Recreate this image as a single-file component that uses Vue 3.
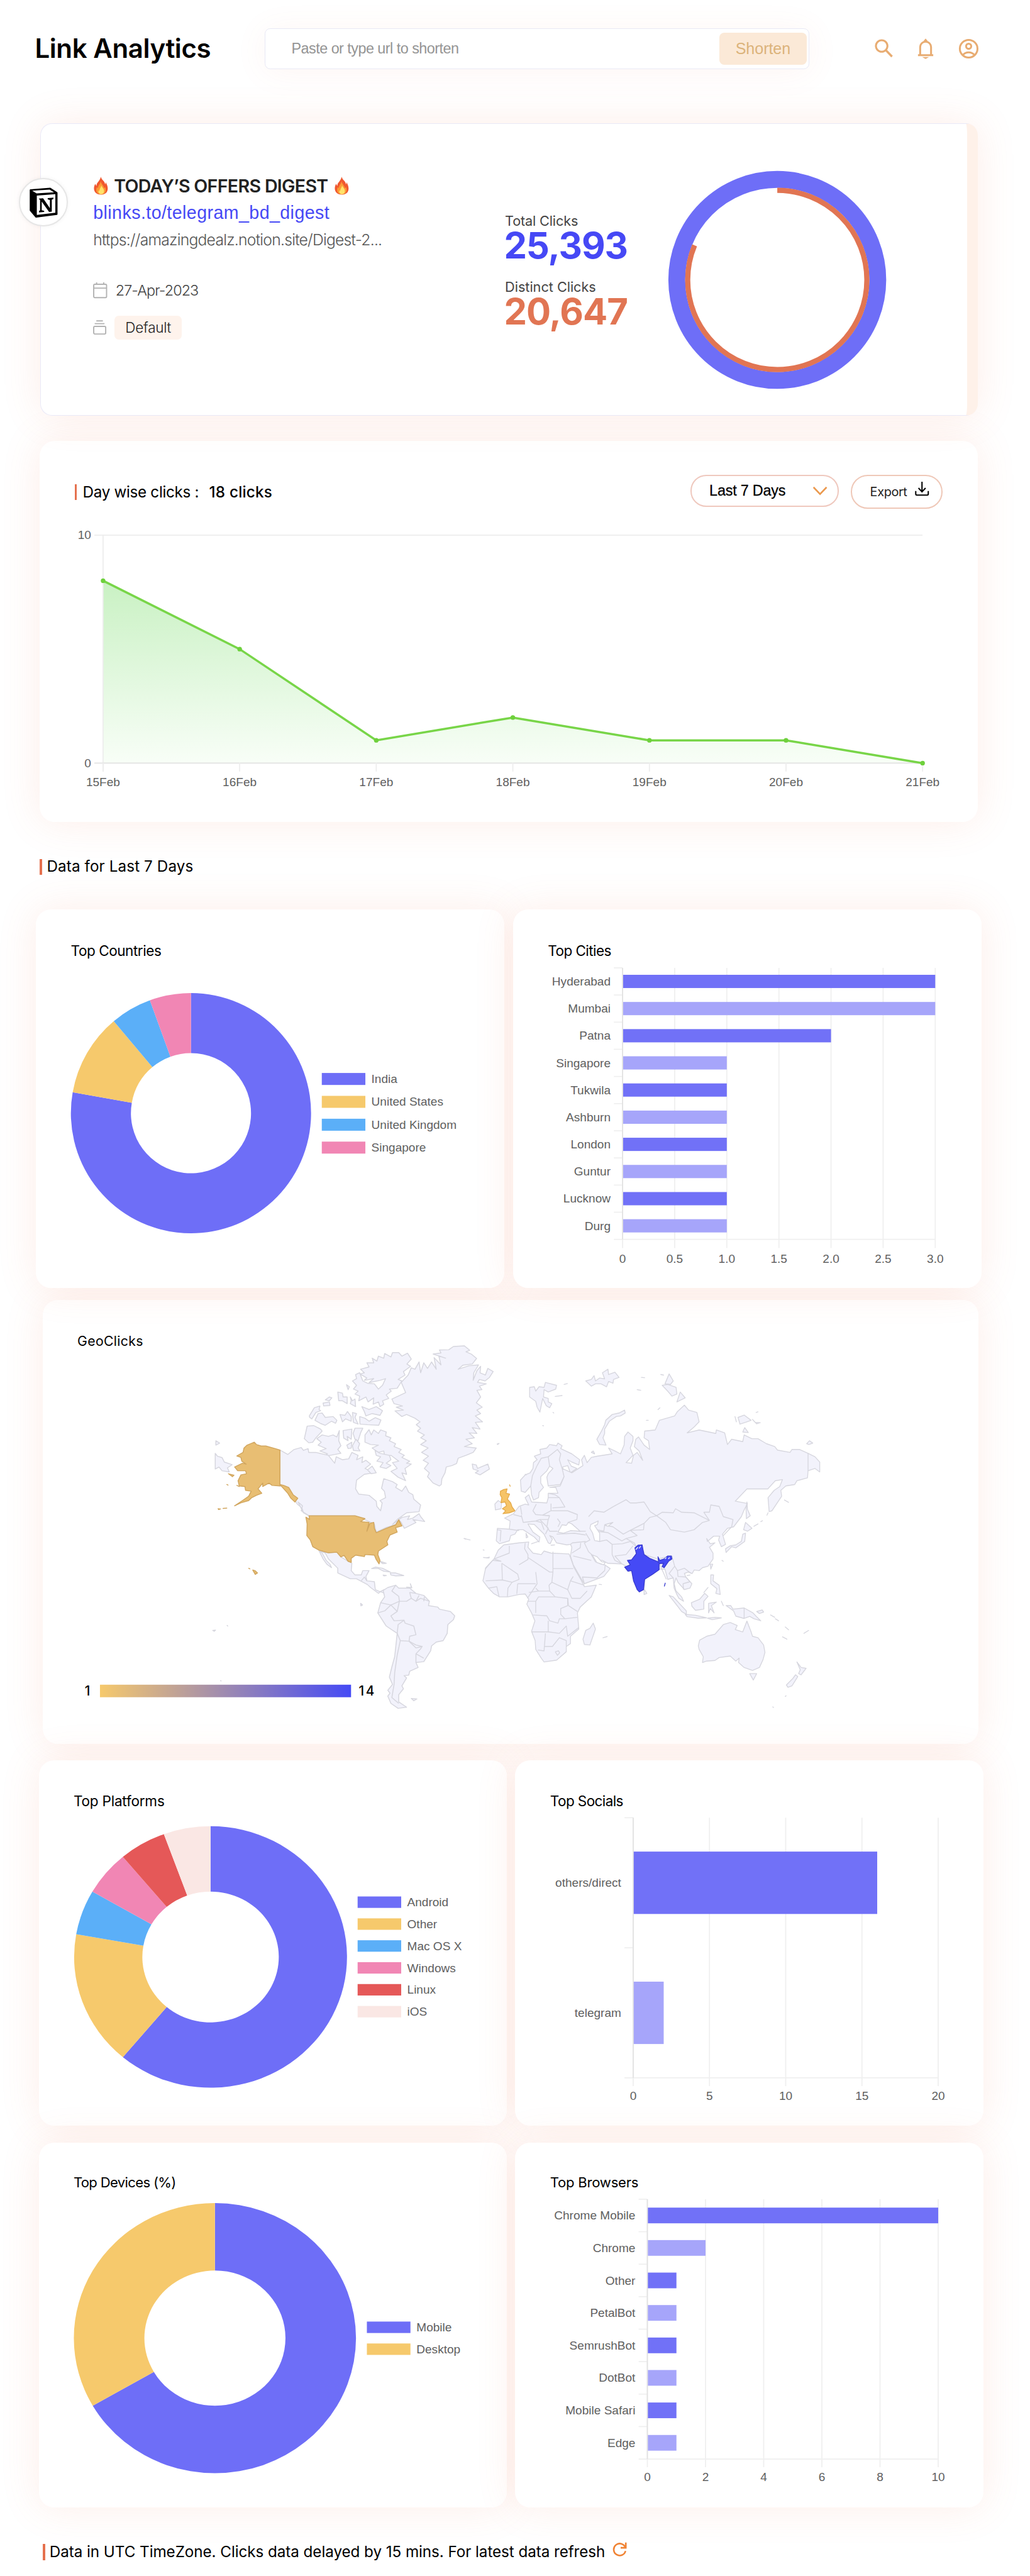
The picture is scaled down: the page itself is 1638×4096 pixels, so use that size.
<script setup>
const vFit = {
  mounted(el, { value }) {
    const page = el.closest('.page')
    const unit = page.getBoundingClientRect().width / 1891
    const width = el.getBoundingClientRect().width / unit
    el.style.letterSpacing = (value - width) / el.textContent.trim().length + 'px'
  },
}

const P = '#6e6ef7'
const L = '#a4a3fa'
const Y = '#f6c96c'
const B = '#5baff8'
const K = '#f186b4'
const R = '#e55858'
const I = '#fae7e4'

function slices(d) {
  const total = d.items.reduce((s, i) => s + i.v, 0)
  let acc = 0
  return d.items.map((i) => {
    const a0 = (acc / total) * Math.PI * 2
    acc += i.v
    const a1 = (acc / total) * Math.PI * 2
    const big = a1 - a0 > Math.PI ? 1 : 0
    const p = (a, k) =>
      `${(d.cx + Math.sin(a) * d.rx * k).toFixed(2)},${(d.cy - Math.cos(a) * d.ry * k).toFixed(2)}`
    return {
      c: i.c,
      d: `M${p(a0, 1)} A${d.rx},${d.ry} 0 ${big} 1 ${p(a1, 1)} L${p(a1, 0.5)} A${d.rx / 2},${d.ry / 2} 0 ${big} 0 ${p(a0, 0.5)}Z`,
    }
  })
}

const rows = [
  {
    cls: 'row-a',
    donut: {
      title: 'Top Countries', tw: 166, box: '66 1769 860 595', cx: 350.8, cy: 2043.8, rx: 220.5, ry: 220.5,
      lx: 591, ly: 1981, step: 42, sh: 22,
      items: [
        { n: 'India', v: 14, c: P }, { n: 'United States', v: 2, c: Y },
        { n: 'United Kingdom', v: 1, c: B }, { n: 'Singapore', v: 1, c: K },
      ],
    },
    bar: {
      title: 'Top Cities', tw: 116, box: '942 1769 860 595', x0: 1143, x1: 1717, y0: 1777, y1: 2275.5, bh: 24.3,
      tick: 16, base: 2318, max: 3, ticks: ['0', '0.5', '1.0', '1.5', '2.0', '2.5', '3.0'],
      items: [
        ['Hyderabad', 3], ['Mumbai', 3], ['Patna', 2], ['Singapore', 1], ['Tukwila', 1],
        ['Ashburn', 1], ['London', 1], ['Guntur', 1], ['Lucknow', 1], ['Durg', 1],
      ],
    },
  },
  {
    cls: 'row-b',
    donut: {
      title: 'Top Platforms', tw: 167, box: '71 3332 859 570', cx: 386, cy: 3592.6, rx: 250.5, ry: 240,
      lx: 656, ly: 3492, step: 40.2, sh: 21,
      items: [
        { n: 'Android', v: 11, c: P }, { n: 'Other', v: 3, c: Y }, { n: 'Mac OS X', v: 1, c: B },
        { n: 'Windows', v: 1, c: K }, { n: 'Linux', v: 1, c: R }, { n: 'iOS', v: 1, c: I },
      ],
    },
    bar: {
      title: 'Top Socials', tw: 134, box: '946 3332 860 570', x0: 1163, x1: 1723, y0: 3337, y1: 3814.5, bh: 114.5,
      tick: 15, base: 3855, max: 20, ticks: ['0', '5', '10', '15', '20'],
      items: [['others/direct', 16], ['telegram', 2]],
    },
  },
  {
    cls: 'row-c',
    donut: {
      title: 'Top Devices (%)', tw: 188, box: '71 4033 859 570', cx: 394, cy: 4292.5, rx: 259, ry: 248,
      lx: 673, ly: 4272.6, step: 40.2, sh: 21,
      items: [{ n: 'Mobile', v: 2, c: P }, { n: 'Desktop', v: 1, c: Y }],
    },
    bar: {
      title: 'Top Browsers', tw: 162, box: '946 4033 860 570', x0: 1189, x1: 1723, y0: 4037.5, y1: 4514.5, bh: 28.8,
      tick: 15, base: 4555, max: 10, ticks: ['0', '2', '4', '6', '8', '10'],
      items: [
        ['Chrome Mobile', 10], ['Chrome', 2], ['Other', 1], ['PetalBot', 1],
        ['SemrushBot', 1], ['DotBot', 1], ['Mobile Safari', 1], ['Edge', 1],
      ],
    },
  },
]
const dims = (b) => {
  const [, , w, h] = b.split(' ')
  return { width: w, height: h }
}
const slot = (b) => (b.y1 - b.y0) / b.items.length

const days = ['15Feb', '16Feb', '17Feb', '18Feb', '19Feb', '20Feb', '21Feb']
const clicks = [8, 5, 1, 2, 1, 1, 0]
const pts = clicks.map((c, i) => [189.5 + i * 250.77, 1400.5 - c * 41.85])
const line = pts.map((p) => p.join(',')).join(' ')

const west = [
  '1210,245 1222,250 1235,225 1240,262 1250,228 1262,247 1275,225 1290,250 1283,210 1305,235 1298,204 1320,212 1280,198 1305,194 1300,184 1330,183 1345,172 1380,170 1397,185 1385,190 1402,198 1419,213 1405,232 1375,236 1360,250 1395,238 1425,235 1410,262 1408,288 1420,255 1432,240 1430,262 1447,270 1455,247 1472,258 1460,278 1446,290 1428,285 1422,295 1450,300 1428,308 1436,320 1420,322 1432,345 1418,365 1437,380 1420,390 1432,402 1415,410 1438,430 1415,432 1430,455 1405,450 1420,470 1395,468 1412,485 1385,490 1405,505 1380,515 1418,520 1408,535 1385,545 1360,555 1355,573 1340,580 1322,585 1318,605 1308,625 1306,645 1300,650 1280,640 1262,618 1268,605 1252,590 1265,572 1248,562 1265,548 1243,535 1264,520 1240,508 1258,495 1240,485 1252,475 1230,462 1240,452 1226,440 1238,430 1222,418 1195,405 1180,412 1158,393 1185,390 1162,380 1182,376 1155,368 1148,352 1192,330 1178,295 1200,270',
  '1210,215 1198,195 1180,205 1170,193 1150,193 1145,208 1125,196 1122,212 1105,205 1100,222 1085,212 1090,228 1068,228 1075,242 1048,250 1060,262 1046,266 1068,280 1060,288 1090,282 1075,296 1110,288 1128,282 1118,305 1105,318 1092,300 1070,298 1055,290 1045,262 1032,268 1035,282 1022,290 1035,305 1025,318 1040,325 1030,335 1045,342 1042,358 1065,345 1072,362 1090,348 1088,370 1105,362 1110,378 1122,370 1118,358 1138,350 1130,338 1146,325 1140,318 1165,315 1180,290 1168,285 1190,270 1185,258 1208,240 1196,232',
  '1052,378 1075,388 1098,378 1118,392 1110,408 1085,402 1065,410 1060,395', '1045,412 1062,418 1075,428 1095,416 1113,424 1106,442 1070,440 1046,438',
  '975,328 990,332 992,345 1005,345 1005,368 990,358 978,358', '1015,345 1022,358 1030,352 1032,378 1015,368 1018,358', '935,355 948,345 956,348 948,358', '928,366 948,362 950,374 930,376', '884,410 900,382 918,376 915,388 920,392 905,398 892,420 885,415', '902,425 912,402 925,400 935,415 960,412 972,425 968,435 955,428 935,442 920,436', '982,405 998,408 1006,395 1018,412 1018,428 1000,420 990,430', '1022,398 1035,402 1030,415 1040,438 1025,432', '1003,303 1012,310 1008,320',
  '877,445 898,443 920,455 925,462 905,485 895,500 882,502 868,488', '908,488 925,475 945,480 960,475 972,482 980,460 978,495 985,512 975,525 985,538 950,545 922,555 942,540 918,530 938,522 912,510 922,500', '992,460 1020,455 1018,490 1005,480 1008,495 994,486', '1030,452 1055,452 1048,468 1040,495 1030,490 1024,470', '1004,510 1020,500 1018,520 1008,522', '1033,490 1045,505 1040,520 1046,530 1025,528 1022,512',
  '1062,475 1075,457 1082,475 1090,458 1105,470 1112,458 1130,465 1128,478 1145,485 1140,495 1160,505 1155,515 1178,525 1170,535 1188,545 1180,552 1205,565 1195,572 1210,575 1190,590 1195,610 1180,605 1192,632 1168,620 1145,600 1165,590 1150,570 1170,565 1145,545 1125,548 1122,530 1105,535 1085,520 1105,510 1080,508 1062,500',
  '1094,528 1110,538 1140,545 1145,560 1130,572 1145,580 1130,590 1110,585 1120,570 1100,565 1112,550 1098,545',
  '790,527 815,542 835,525 858,518 865,528 880,522 882,535 905,535 945,545 965,572 970,550 990,560 1010,557 1020,535 1040,545 1035,560 1055,550 1052,570 1065,562 1080,575 1062,590 1090,605 1060,610 1035,630 1032,660 1042,678 1075,682 1098,702 1100,720 1112,735 1117,708 1110,700 1128,690 1124,668 1115,658 1122,625 1150,635 1165,645 1160,655 1180,668 1192,650 1202,672 1215,680 1218,695 1240,715 1235,738 1195,742 1165,765 1150,782 1180,758 1205,752 1198,765 1215,760 1235,745 1240,755 1253,772 1215,765 1225,775 1188,795 1178,775 1170,765 1160,783 1130,792 1098,808 1092,780 1060,765 1030,752 883,752 865,740 860,725 845,712 820,660 790,650',
  '1070,595 1085,582 1098,605 1082,608', '848,705 862,718 858,735 882,752 865,742', '583,538 590,548 605,553 612,568 637,577 622,588 628,602 605,598 595,585 583,592', '585,495 597,503 585,510',
  '915,872 945,879 972,877 985,893 1008,908 1020,915 1018,940 1030,955 1050,955 1055,940 1075,940 1065,960 1068,975 1092,978 1095,1005 1110,1012 1123,1005 1125,1018 1112,1012 1105,1018 1080,998 1070,988 1035,968 1015,968 975,948 975,932 945,900 935,880', '915,872 925,880 938,905 950,918 955,930 940,918 928,900',
  '1083,933 1095,928 1118,932 1143,945 1122,942 1105,933', '1143,948 1160,948 1186,957 1160,958 1145,955', '1120,955 1130,957 1122,958', '1110,908 1130,915 1118,916', '1195,997 1212,999 1207,985 1211,998',
  '1120,1008 1135,998 1160,990 1170,1000 1205,1000 1225,1018 1250,1025 1268,1045 1265,1060 1295,1065 1300,1072 1335,1080 1349,1095 1345,1108 1327,1125 1325,1155 1312,1180 1290,1185 1275,1198 1272,1215 1250,1252 1225,1255 1232,1272 1205,1285 1202,1298 1187,1300 1195,1308 1180,1335 1185,1345 1170,1365 1170,1390 1195,1408 1168,1412 1145,1395 1135,1370 1142,1360 1135,1350 1150,1330 1140,1305 1148,1270 1157,1235 1165,1155 1130,1130 1103,1085 1112,1050 1125,1030',
  '1210,1378 1228,1380 1218,1386', '1405,575 1418,578 1422,590 1455,575 1460,592 1430,612 1415,605 1425,598 1408,592', '575,1145 584,1144 580,1148', '1048,1052 1054,1058 1049,1061', '621,1128 623,1130', '1380,830 1384,832', '1440,869 1443,870', '600,1317 602,1318', '1485,506 1490,505', '1452,896 1460,894',
]
const westLines = [
  '1103,1085 1125,1078 1145,1058 1165,1080 1145,1095 1155,1112 1187,1110 1190,1120 1218,1130 1225,1160 1205,1165 1203,1182 1225,1195 1245,1200 1240,1208 1225,1225 1225,1255',
  '1165,1155 1175,1180 1203,1182 1225,1205 1245,1200', '1175,1180 1165,1230 1157,1290 1155,1330 1148,1375 1170,1395', '1112,1050 1145,1058', '1145,1058 1172,1045 1165,1080', '1160,990 1148,1010 1170,1028 1172,1045 1195,1045 1210,1035 1205,1015 1225,1018', '1210,1035 1225,1045 1240,1035 1268,1045', '1225,1045 1235,1025', '1250,1045 1252,1030', '1187,1110 1168,1125 1165,1155', '1225,1225 1250,1240', '1050,975 1060,962 1068,975',
]
const usa = [
  '883,752 1030,752 1062,762 1048,772 1075,775 1068,805 1078,778 1090,775 1092,795 1098,810 1130,795 1160,783 1170,766 1180,787 1160,793 1165,808 1142,818 1132,840 1135,852 1105,873 1103,885 1110,905 1107,917 1097,900 1092,887 1062,885 1060,892 1032,887 1018,898 1018,912 1008,908 995,888 985,893 972,877 945,879 915,870 895,858 887,835 876,820 877,780 873,757 885,765',
  '708,500 715,508 730,513 745,513 775,522 790,527 790,650 765,648 755,640 735,652 735,640 720,660 732,675 715,682 700,690 690,700 665,708 645,718 670,700 690,685 698,668 680,665 678,652 660,650 656,632 665,612 683,608 680,598 655,598 645,585 670,572 682,575 668,565 665,552 652,547 672,535 675,520 685,510',
  '790,645 802,648 818,655 832,680 847,692 838,705 825,692 815,675', '625,608 643,613 638,618', '592,728 600,729 594,731', '608,727 620,726', '690,932 694,934', '703,938 710,940 718,948 711,953', '652,648 660,652', '620,645 624,647',
]
const east = [
  '245,630 262,612 280,605 290,590 292,570 305,560 295,548 318,540 315,525 340,520 350,508 375,512 380,503 395,512 390,522 430,540 458,560 455,578 430,568 415,560 428,582 448,590 425,605 415,580 397,585 402,618 388,645 345,650 340,620 345,608 362,590 350,582 340,598 318,618 318,640 328,655 312,672 310,690 292,698 285,680 282,650 262,672 248,668',
  '278,312 295,310 300,325 312,310 330,312 335,295 375,305 372,318 345,328 330,320 328,345 345,350 345,362 358,368 350,382 338,375 325,350 315,397 305,380 300,360 278,345', '480,290 500,285 510,272 515,290 530,280 548,283 540,262 560,250 562,268 585,260 600,278 580,285 578,298 562,292 555,310 535,300 515,300 500,308', '620,390 622,400 605,410 590,412 565,428 548,455 548,470 542,485 553,510 530,508 520,490 535,465 548,440 552,425 575,405 600,400',
  '780,266 795,290 785,302 765,300', '755,305 775,302 805,312 808,335 790,342 775,325', '820,328 838,348 808,362', '1017,412 1022,430', '1028,415 1050,407 1075,425 1055,432 1035,438', '1080,422 1090,432 1108,433 1095,437', '1045,465 1052,450 1065,467', '1275,505 1285,495 1297,503 1283,508', '500,535 507,530 512,540', '402,302 414,299', '370,343 395,340', '680,278 692,279', '750,268 760,270', '665,320 678,322', '740,388 747,382', '698,425 705,425', '1093,398 1100,396', '262,610 266,612',
  '402,618 395,590 430,605 470,580 465,560 475,545 485,570 500,552 520,548 575,540 562,520 585,530 605,540 618,510 620,480 632,465 650,480 650,495 640,520 650,545 625,570 645,572 652,545 665,535 685,562 672,530 655,515 660,490 670,482 690,510 710,525 706,495 690,485 692,462 730,458 745,425 800,410 810,395 835,373 850,390 880,398 888,430 870,448 845,468 888,458 948,470 950,458 980,468 990,508 1005,490 1045,498 1050,475 1078,488 1100,488 1130,505 1160,515 1170,527 1215,535 1222,525 1250,525 1280,538 1305,550 1322,568 1322,602 1305,590 1280,598 1278,622 1240,632 1232,645 1200,650 1182,665 1185,685 1150,735 1140,738 1136,690 1158,665 1178,652 1188,628 1162,632 1135,660 1060,660 1018,702 1062,710 1050,732 1040,755 1012,790 990,795 972,815 983,850 968,858 958,835 962,822 940,822 918,840 915,830 928,848 945,845 925,860 938,880 938,900 920,925 900,930 888,940 870,938 863,950 848,945 835,950 840,962 862,985 855,1000 835,1005 812,980 805,965 798,985 805,1010 825,1030 832,1045 815,1035 808,1022 798,1000 795,965 775,970 765,935 745,935 720,930 692,960 690,1000 672,1000 655,965 645,930 625,925 610,917 560,915 540,905 525,905 500,885 515,910 535,918 548,920 568,933 545,960 475,985 465,970 435,920 425,890 430,860 425,850 412,852 375,845 362,825 350,820 360,832 352,848 345,845 330,815 295,782 272,780 290,808 315,825 312,842 295,825 255,800 235,800 225,815 210,820 205,838 170,848 158,838 162,795 205,798 208,770 188,760 220,745 240,720 262,712 275,715 262,690 275,680 285,705 340,708 345,690 345,675 380,675 372,655 350,655 388,650',
  '153,712 165,700 177,708 175,728 155,732', '265,812 272,825 266,828', '285,848 310,840', '355,853 368,852',
  '185,852 240,845 275,842 272,860 290,880 320,885 330,873 355,880 420,883 425,895 438,930 465,975 475,995 518,990 500,1030 460,1065 450,1085 455,1140 425,1165 425,1190 410,1200 410,1218 375,1247 330,1253 320,1240 300,1210 298,1180 285,1148 297,1112 285,1085 268,1055 275,1038 262,1020 240,1022 200,1030 170,1030 148,1018 130,1000 110,975 120,930 150,900 165,870',
  '507,1120 515,1140 495,1195 475,1193 470,1175 480,1145 495,1138', '690,1003 700,1018 690,1022',
  '780,1025 795,1030 842,1078 842,1090 825,1080 805,1055', '838,1090 875,1093 915,1102 885,1103 845,1098', '918,1103 945,1100 968,1102 935,1108', '860,1050 890,1038 908,1018 920,1028 905,1045 905,1072 875,1076 862,1062', '922,1052 950,1048 932,1060 942,1085 928,1070 922,1085', '985,1060 1002,1060 1010,1072 1050,1068 1082,1085 1095,1098 1110,1112 1085,1105 1070,1097 1050,1104 1020,1096 1012,1078', '1095,1080 1115,1075 1120,1082 1105,1087', '1145,1092 1160,1100', '1162,1105 1174,1112', '930,955 940,955 938,975 960,990 964,1022 948,1018 952,1002 930,985', '905,1015 920,998', '968,1045 975,1060', '928,918 937,918 930,935', '845,957 855,955',
  '983,865 1000,855 1020,852 1040,840 1045,815 1055,812 1052,840 1020,862 1005,858 985,878', '1048,800 1055,775 1078,795 1062,805', '1060,705 1062,730 1072,752 1058,762 1057,730', '1085,788 1100,780', '1110,772 1116,769', '1132,750 1136,742', '970,905 975,908',
  '885,1198 890,1178 915,1165 945,1158 975,1125 1000,1118 1025,1128 1018,1142 1045,1150 1060,1113 1075,1150 1080,1165 1100,1170 1120,1195 1125,1220 1118,1245 1105,1272 1080,1282 1050,1272 1030,1255 1032,1240 1020,1250 1000,1233 960,1238 945,1248 915,1250 900,1255 903,1235 888,1210', '1070,1293 1095,1293 1083,1315', '1240,1253 1255,1272 1273,1275 1255,1297 1246,1293 1252,1280', '1235,1297 1243,1303 1222,1335 1208,1340 1202,1332 1225,1310', '1198,1133 1210,1143', '1188,1167 1204,1175', '1265,1155 1282,1145', '1153,1407 1156,1409', '1198,1371 1201,1369', '42,830 64,835', '162,508 168,504', '528,987 537,988', '112,895 132,897', '542,1170 557,1166', '1195,698 1210,706', '362,398 365,400', '325,443 328,444',
]
const seas = ['380,808 395,783 410,785 418,775 430,780 460,805 425,803 400,812', '498,782 525,770 522,782 512,786 530,812 530,840 512,837 505,812 495,795', '503,886 520,892 538,910 550,912 545,920 520,912', '548,783 578,775 560,788']
const eastLines = [
  '282,650 288,615 305,580 320,555 345,550 350,582', '345,550 378,525 390,540 385,560 395,590', '490,755 510,735 545,740 580,720 625,697 640,708 662,708 690,705 712,738 735,752 710,758 690,778 688,800 640,802 615,815 578,790 548,785 545,805 520,800', '735,752 755,740 795,742 803,728 825,740 870,742 925,768 900,775 870,800 835,808 785,800 768,775 735,752', '925,768 905,740 925,740 930,715 960,720 975,755 1010,765 1005,790 975,820',
  '640,802 665,820 625,830 655,845 662,858', '690,885 740,900 790,890 800,925 810,940 835,932 860,950', '740,905 770,970', '800,925 780,950 795,965', '810,940 812,960 840,962 855,978 830,985 832,1005', '480,812 495,835 475,845 490,875 505,888', '530,840 555,835 575,850 575,885 585,905 610,917', '575,850 612,848 640,840 662,858', '520,805 560,810 610,838 625,830', '690,778 640,802', '425,850 432,845 480,840', '430,880 460,862 462,845', '435,890 500,905', '475,985 468,962 520,965 548,940 550,920', '610,917 585,890 625,885 650,855',
  '248,750 255,775 300,770 315,765 345,765 350,752 300,748 290,735 302,712', '245,720 250,748', '220,748 248,755', '355,710 355,735 325,750', '355,735 415,735 450,748 448,765 415,775', '345,765 340,790 350,805 378,805', '378,762 388,775 380,790', '300,770 320,775 330,800', '315,765 345,795 335,815', '375,815 440,812 480,818', '345,690 385,690 405,722 360,725', '345,675 370,680 385,690', '162,800 175,802 172,840', '205,798 240,803', '480,805 455,805', '325,750 350,752',
  '118,935 145,905 175,908 150,900 205,880 205,855', '178,915 235,952 240,970 215,980 180,972 120,975', '178,915 180,972', '262,845 260,865 272,885 272,902 240,920', '272,895 350,945 362,945 362,875', '362,933 435,933', '362,945 358,980 348,990 350,1010 310,1010 300,1000', '300,945 305,985 270,1035', '235,985 300,985', '235,985 232,1020', '215,980 200,1000 198,1030', '130,1000 160,995 168,1030', '358,980 415,1005 425,975 435,960', '425,975 475,990', '415,1005 430,1035 460,1035 485,1010', '270,1045 300,1045 310,1030 370,1030 415,1035 415,1060 390,1070 390,1090 405,1105 385,1105 380,1120 350,1112 340,1095 290,1092', '300,1045 300,1085', '415,1035 418,1060 450,1080', '405,1105 450,1100', '285,1150 345,1150 345,1112', '345,1150 385,1155 410,1130 415,1165 455,1135', '335,1155 330,1215 308,1212', '332,1200 360,1200 385,1170 410,1180 410,1200', '370,1218 382,1215 386,1222 378,1230 370,1218', '1050,1068 1050,1104', '1280,538 1280,598', '310,1010 275,1015', '370,1030 350,1010',
]
const uk = ['173,668 185,662 197,660 193,675 206,678 198,695 210,708 215,722 225,735 205,742 182,745 192,735 180,728 195,718 190,705 175,707 178,690 172,680', '206,646 208,651']
const india = ['657,862 668,853 683,852 686,868 690,885 710,898 738,909 742,912 740,893 746,905 762,900 775,890 788,890 790,900 778,908 762,930 755,926 760,915 744,916 744,937 720,953 692,970 688,1005 673,1013 665,1005 652,975 645,940 632,942 620,928 640,920 630,905 645,903 662,882', '763,993 766,983']
</script>

<template>
  <div class="page">
    <header class="top">
      <h1><span v-fit="323">Link Analytics</span></h1>
      <div class="search">
        <span class="hint"><span v-fit="307">Paste or type url to shorten</span></span>
        <button class="shorten"><span v-fit="101">Shorten</span></button>
      </div>
      <nav class="icons">
        <svg width="36" height="38" viewBox="0 0 36 38"><circle cx="14" cy="14" r="10.6" /><path d="M21.5 21.5L33 33.5" stroke-width="4" /></svg>
        <svg width="30" height="38" viewBox="0 0 30 38"><path d="M5 30V16a10 10 0 0 1 20 0v14M1 31h28" /><path d="M12.5 4.5h5L15 1.5zM11.5 35h7L15 37z" fill="#e8ac72" stroke-width="1.5" /></svg>
        <svg width="38" height="38" viewBox="0 0 38 38"><circle cx="19" cy="19" r="16.2" /><circle cx="19" cy="14.5" r="4.7" /><path d="M8.5 30.5c5-6.3 16-6.3 21 0" /></svg>
      </nav>
    </header>

    <section class="card summary">
      <div class="avatar">
        <svg width="54" height="56" viewBox="0 0 54 56">
          <path d="M3 5L39 2 51 10V49L13 54 3 42Z" fill="#000" stroke="#000" stroke-width="3" stroke-linejoin="round" />
          <path d="M6 6L38 4 46 9 14 11Z" fill="#fff" />
          <path d="M14.500 15L48.500 12.500V46.500L14.500 50.500Z" fill="#fff" />
          <path d="M18 20.500L26 20 38.500 38V23L34.500 22V19.500L45 18.800V21L42 22.500V44.500L37 45 23.500 26V42L28 43V45L18.500 45.800V43.500L20.500 42V23.500Z" fill="#000" />
        </svg>
      </div>
      <div class="info">
        <div class="offer">
          <svg v-for="n in 2" :key="n" :class="'flame flame' + n" width="27" height="33" viewBox="0 0 27 33">
            <path d="M13 0c2 7 7 7 8 14 1-1 1-3 1-4 6 9 6 22-8 23C0 33-2 21 3 13c1 2 1 3 2 4 0-7 7-9 8-17z" fill="#f0582f" />
            <path d="M13 8c1 6 5 7 6 13l2-2c3 7 0 13-7 13.500C5 32 3 25 6 19l2 2c0-6 4-7 5-13z" fill="#fb9a35" />
            <path d="M14 16c1 4 5 6 5 10 0 4-2 6-5 6-4 0-6-3-5-7l1.500 1c0-4 3-6 3.500-10z" fill="#ffe36b" />
          </svg>
          <span class="name"><span v-fit="393">TODAY’S OFFERS DIGEST</span></span>
        </div>
        <div class="short"><span v-fit="434">blinks.to/telegram_bd_digest</span></div>
        <div class="long"><span v-fit="530">https://amazingdealz.notion.site/Digest-2...</span></div>
        <div class="date">
          <svg width="26" height="30" viewBox="0 0 26 30"><rect x="1.200" y="3.500" width="23.600" height="24.500" rx="2" /><path d="M1 10.500h24M6.500 0v4M19.500 0v4" /></svg>
          <span v-fit="152">27-Apr-2023</span>
        </div>
        <div class="tag">
          <svg width="26" height="28" viewBox="0 0 26 28"><rect x="1.200" y="11.500" width="22" height="14" rx="2" /><path d="M3 6.500h18M6 1.500h12" /></svg>
          <span class="chip"><span v-fit="84">Default</span></span>
        </div>
      </div>
      <div class="stats">
        <div class="label"><span v-fit="134">Total Clicks</span></div>
        <div class="num blue"><span v-fit="227">25,393</span></div>
        <div class="label second"><span v-fit="167">Distinct Clicks</span></div>
        <div class="num orange"><span v-fit="227">20,647</span></div>
      </div>
      <svg class="ring" width="402" height="402" viewBox="-201 -201 402 402">
        <circle r="184.500" fill="none" stroke="#6e6ef7" stroke-width="31" />
        <circle r="164.500" fill="none" stroke="#e17553" stroke-width="9.500" pathLength="1000" stroke-dasharray="813 187" transform="rotate(-90)" />
      </svg>
    </section>

    <section class="card daily">
      <div class="dailyhead">
        <i class="mark"></i>
        <span class="dayname"><span v-fit="213">Day wise clicks :</span></span>
        <span class="total"><span v-fit="116">18 clicks</span></span>
        <div class="select"><span v-fit="140">Last 7 Days</span>
          <svg width="28" height="18" viewBox="0 0 28 18"><path d="M2 2l12 12.500L26 2" fill="none" stroke="#eb994e" stroke-width="3" /></svg>
        </div>
        <button class="export"><span v-fit="68">Export</span>
          <svg width="26" height="27" viewBox="0 0 26 27" fill="none" stroke="#000" stroke-width="2.400"><path d="M13 0v18M6.500 11.500L13 18.500l6.500-7M1.500 17v5.500q0 2 2 2h19q2 0 2-2V17" /></svg>
        </button>
      </div>
      <svg class="chart" width="1722" height="550" viewBox="73 959 1722 550">
        <defs>
          <linearGradient id="area" x1="0" y1="0" x2="0" y2="1"><stop offset="0" stop-color="#c9f1c3" /><stop offset="1" stop-color="#f8fef7" /></linearGradient>
        </defs>
        <polygon :points="line + ' 189.5,1400.5'" fill="url(#area)" />
        <path d="M173.500 982H1694M189.500 982V1416" stroke="#ededed" stroke-width="2" fill="none" />
        <path d="M173.500 1400.500H1694" stroke="#e2e2e2" stroke-width="2" />
        <path v-for="(p, i) in pts" :key="'t' + i" :d="`M${p[0]} 1400V1416`" stroke="#ededed" stroke-width="2" />
        <polyline :points="line" fill="none" stroke="#78d548" stroke-width="4" />
        <circle v-for="(p, i) in pts" :key="'c' + i" :cx="p[0]" :cy="p[1]" r="4.200" fill="#6ed03c" />
        <text x="167.500" y="989" text-anchor="end">10</text>
        <text x="167.500" y="1408" text-anchor="end">0</text>
        <text v-for="(d, i) in days" :key="d" :x="pts[i][0]" y="1443" text-anchor="middle">{{ d }}</text>
      </svg>
    </section>

    <div class="note range"><i class="mark"></i><span v-fit="269">Data for Last 7 Days</span></div>

    <template v-for="(row, ri) in rows" :key="row.cls">
      <div :class="['pair', row.cls]">
        <section class="card">
          <h3><span v-fit="row.donut.tw">{{ row.donut.title }}</span></h3>
          <svg class="chart" v-bind="dims(row.donut.box)" :viewBox="row.donut.box">
            <path v-for="(s, i) in slices(row.donut)" :key="i" :d="s.d" :fill="s.c" />
            <g v-for="(it, i) in row.donut.items" :key="it.n">
              <rect :x="row.donut.lx" :y="row.donut.ly + i * row.donut.step - row.donut.sh / 2" width="80" :height="row.donut.sh" :fill="it.c" />
              <text :x="row.donut.lx + 91" :y="row.donut.ly + i * row.donut.step + 7.500">{{ it.n }}</text>
            </g>
          </svg>
        </section>
        <section class="card">
          <h3><span v-fit="row.bar.tw">{{ row.bar.title }}</span></h3>
          <svg class="chart" v-bind="dims(row.bar.box)" :viewBox="row.bar.box">
            <g stroke="#efefef" stroke-width="2">
              <line v-for="n in row.bar.items.length + 1" :key="n" :x1="row.bar.x0 - 16" :x2="row.bar.x0" :y1="row.bar.y0 + (n - 1) * slot(row.bar)" :y2="row.bar.y0 + (n - 1) * slot(row.bar)" />
              <line v-for="(t, i) in row.bar.ticks" :key="t" :x1="row.bar.x0 + (i * (row.bar.x1 - row.bar.x0)) / (row.bar.ticks.length - 1)" :x2="row.bar.x0 + (i * (row.bar.x1 - row.bar.x0)) / (row.bar.ticks.length - 1)" :y1="row.bar.y0" :y2="row.bar.y1 + row.bar.tick" />
              <line :x1="row.bar.x0" :x2="row.bar.x1" :y1="row.bar.y1" :y2="row.bar.y1" />
              <line :x1="row.bar.x0" :x2="row.bar.x0" :y1="row.bar.y0" :y2="row.bar.y1" stroke="#e2e2e2" />
            </g>
            <g v-for="(it, i) in row.bar.items" :key="it[0]">
              <rect :x="row.bar.x0 + 1" :y="row.bar.y0 + (i + 0.5) * slot(row.bar) - row.bar.bh / 2" :width="(it[1] / row.bar.max) * (row.bar.x1 - row.bar.x0) - 1" :height="row.bar.bh" :fill="i % 2 ? L : P" fill-opacity=".98" />
              <text :x="row.bar.x0 - 22" :y="row.bar.y0 + (i + 0.5) * slot(row.bar) + 7.500" text-anchor="end">{{ it[0] }}</text>
            </g>
            <text v-for="(t, i) in row.bar.ticks" :key="'x' + t" :x="row.bar.x0 + (i * (row.bar.x1 - row.bar.x0)) / (row.bar.ticks.length - 1)" :y="row.bar.base" text-anchor="middle">{{ t }}</text>
          </svg>
        </section>
      </div>

      <section v-if="ri === 0" class="card geo">
        <h3><span v-fit="121">GeoClicks</span></h3>
        <svg class="chart map" width="1718" height="716" viewBox="78 2486 1718 716">
          <defs>
            <linearGradient id="scale"><stop offset="0" stop-color="#f6c96c" /><stop offset="1" stop-color="#454af5" /></linearGradient>
          </defs>
          <g transform="translate(60 2380) scale(.574 .5357)">
            <polygon v-for="(p, i) in west" :key="i" class="land" :points="p" />
            <polyline v-for="(p, i) in westLines" :key="'l' + i" class="edge" :points="p" />
            <polygon v-for="(p, i) in usa" :key="'u' + i" class="usa" :points="p" />
          </g>
          <g transform="translate(830 2380) scale(.5102 .5357)">
            <polygon v-for="(p, i) in east" :key="i" class="land" :points="p" />
            <polyline v-for="(p, i) in eastLines" :key="'l' + i" class="edge" :points="p" />
            <polygon v-for="(p, i) in seas" :key="'s' + i" class="sea" :points="p" />
            <polygon v-for="(p, i) in uk" :key="'k' + i" class="uk" :points="p" />
            <polygon v-for="(p, i) in india" :key="'n' + i" class="india" :points="p" />
            <path d="M660,868 L668,860 M672,864 L678,856 M765,900 L770,895 M777,900 L782,895" stroke="#f2f2fb" stroke-width="3" />
          </g>
          <rect x="183" y="3093" width="461" height="23" fill="url(#scale)" />
          <text class="scale" x="155" y="3112.500">1</text>
          <text class="scale" x="658" y="3112.500" textLength="29">14</text>
        </svg>
      </section>
    </template>

    <footer class="note foot"><i class="mark"></i><span v-fit="1020">Data in UTC TimeZone. Clicks data delayed by 15 mins. For latest data refresh</span>
      <svg width="27" height="27" viewBox="0 0 27 27" fill="none" stroke="#f08334" stroke-width="3"><path d="M23.500 9.500A11 11 0 1 0 24 16.500M24.500 1v9.500H15" /></svg>
    </footer>
  </div>
</template>

<style>
body {
  margin: 0;
  background: #fff;
  overflow: hidden;
}
</style>

<style scoped>
.page {
  zoom: 0.8662;
  width: 1891px;
  height: 4728px;
  overflow: hidden;
  background: #fff;
  font-family: Inter, 'Liberation Sans', sans-serif;
  color: #000;
}
.page * {
  box-sizing: border-box;
}
span {
  white-space: nowrap;
}
h1,
h3 {
  margin: 0;
}
button {
  border: 0;
  padding: 0;
  background: none;
  font-family: inherit;
}
.top {
  display: flex;
  align-items: center;
  height: 75px;
  margin-top: 52px;
  padding-left: 64px;
}
h1 {
  width: 422px;
  font-size: 48.5px;
  font-weight: 600;
  line-height: 74px;
}
.search {
  display: flex;
  align-items: center;
  justify-content: space-between;
  width: 1000px;
  height: 75px;
  border: 2px solid #e8e8f5;
  border-radius: 10px;
  padding: 0 4px 0 48px;
  background: #fff;
  box-shadow: 0 4px 60px rgba(240, 120, 80, 0.07);
}
.hint {
  font: 27px 'Liberation Sans', sans-serif;
  color: #949494;
}
.shorten {
  width: 160px;
  height: 60px;
  border-radius: 9px;
  background: #fbe9d7;
  color: #dbb37b;
  font: 29px 'Liberation Sans', sans-serif;
}
.icons {
  display: flex;
  align-items: center;
  margin-left: 119px;
}
.icons svg {
  fill: none;
  stroke: #e8ac72;
  stroke-width: 3.5;
}
.icons svg:nth-child(2) {
  margin-left: 44px;
}
.icons svg:nth-child(3) {
  margin-left: 44px;
}
.card {
  background: #fff;
  border-radius: 28px;
  box-shadow: 0 0 72px rgba(238, 115, 80, 0.13);
}
.summary {
  position: relative;
  display: flex;
  width: 1721px;
  height: 537px;
  margin: 99px 0 0 74px;
  border: 2px solid #e9e9f8;
  border-right: 20px solid #fef1e9;
  border-radius: 22px;
}
.avatar {
  position: absolute;
  left: -40px;
  top: 100px;
  display: flex;
  align-items: center;
  justify-content: center;
  width: 89px;
  height: 89px;
  border: 2.4px solid #e6e6e6;
  border-radius: 50%;
  background: #fff;
  box-shadow: 0 0 8px rgba(0, 0, 0, 0.05);
}
.info {
  width: 852px;
  padding: 92px 0 0 96px;
}
.offer {
  display: flex;
  align-items: center;
  height: 44px;
  font-size: 33px;
  font-weight: 600;
  color: #222;
}
.flame1 {
  margin: 0 10px 0 1px;
}
.flame2 {
  order: 2;
  margin-left: 12px;
}
.short {
  height: 40px;
  margin-top: 8px;
  font: 33px/40px 'Liberation Sans', sans-serif;
  color: #4648f5;
}
.long {
  height: 40px;
  margin-top: 9px;
  font-size: 28.5px;
  font-weight: 300;
  line-height: 40px;
  color: #555;
}
.date,
.tag {
  display: flex;
  align-items: center;
  gap: 15px;
  height: 40px;
  margin-top: 53px;
  font-size: 27px;
  font-weight: 300;
  color: #444;
}
.date svg,
.tag svg {
  fill: none;
  stroke: #b3b3b3;
  stroke-width: 2.2;
}
.tag {
  gap: 13px;
  height: 44px;
  margin-top: 26px;
  font-size: 26px;
}
.chip {
  width: 123px;
  height: 44px;
  padding-left: 20px;
  border-radius: 8px;
  background: #fef3ec;
  line-height: 44px;
  color: #222;
}
.stats {
  width: 299px;
  padding-top: 163px;
}
.label {
  height: 30px;
  font-size: 25px;
  line-height: 30px;
  color: #444;
}
.second {
  margin-top: 34px;
}
.num {
  height: 56px;
  margin-top: 1px;
  margin-left: -2px;
  font-size: 67px;
  font-weight: 700;
  line-height: 58px;
}
.blue {
  color: #4648f5;
}
.orange {
  color: #e17553;
}
.ring {
  margin-top: 86px;
}
.daily {
  width: 1722px;
  height: 700px;
  margin: 46px 0 0 73px;
}
.dailyhead {
  display: flex;
  align-items: flex-start;
  height: 150px;
  padding: 38px 64px 0;
}
.mark {
  flex: none;
  width: 4px;
  height: 29px;
  background: #e5714e;
}
.dailyhead .mark {
  margin-top: 42px;
}
.dayname {
  width: 232px;
  margin-left: 11px;
  padding-top: 37px;
  font-size: 28px;
  line-height: 40px;
}
.total {
  padding-top: 37px;
  font-size: 28px;
  font-weight: 500;
  line-height: 40px;
}
.select {
  display: flex;
  align-items: center;
  justify-content: space-between;
  width: 272px;
  height: 59px;
  margin: 25px 22px 0 auto;
  padding: 0 18px 0 32px;
  border: 2.4px solid #efc8be;
  border-radius: 29px;
  font: 27px 'Liberation Sans', sans-serif;
  -webkit-text-stroke: 0.3px #000;
}
.export {
  display: flex;
  align-items: center;
  gap: 15px;
  width: 169px;
  height: 62px;
  margin-top: 25px;
  padding-left: 33px;
  border: 2.4px solid #efc8b8;
  border-radius: 31px;
  font-size: 23px;
  color: #222;
}
.export svg {
  margin-bottom: 10px;
}
.chart {
  display: block;
  font: 22px 'Liberation Sans', sans-serif;
  fill: #606060;
}
.note {
  display: flex;
  align-items: center;
  height: 30px;
  font-size: 28px;
  line-height: 30px;
}
.range {
  margin: 67px 0 0 73px;
}
.range span {
  margin-left: 9px;
}
.pair {
  display: flex;
  gap: 16px;
}
.pair .card {
  flex: none;
}
.row-a {
  height: 695px;
  margin: 63px 0 0 66px;
}
.row-b {
  height: 670px;
  margin: 30px 0 0 71px;
}
.row-c {
  height: 670px;
  margin: 31px 0 0 71px;
}
h3 {
  height: 100px;
  padding: 62px 0 0 64px;
  font-size: 26px;
  font-weight: 400;
  line-height: 30px;
}
.row-b h3 {
  padding-top: 59px;
}
.row-c h3 {
  padding-top: 58px;
  font-size: 25.5px;
}
.geo {
  width: 1718px;
  height: 816px;
  margin: 22px 0 0 78px;
}
.geo h3 {
  padding-top: 60px;
  font-size: 24.5px;
}
.map {
  overflow: visible;
}
.land,
.sea,
.edge,
.usa,
.uk,
.india {
  stroke-width: 3;
  stroke: #d6d6de;
  stroke-linejoin: round;
}
.land {
  fill: #f2f2fb;
}
.sea {
  fill: #fff;
}
.edge {
  fill: none;
}
.usa {
  fill: #e8be73;
  stroke: #d1a65f;
}
.uk {
  fill: #f6c468;
  stroke: #e5ab4b;
}
.india {
  fill: #454af5;
  stroke: #393cd0;
}
.scale {
  font: 500 24px Inter, sans-serif;
  fill: #000;
}
.foot {
  margin: 67px 0 0 79px;
}
.foot span {
  margin-left: 8px;
}
.foot svg {
  margin: -11px 0 0 14px;
}
</style>
